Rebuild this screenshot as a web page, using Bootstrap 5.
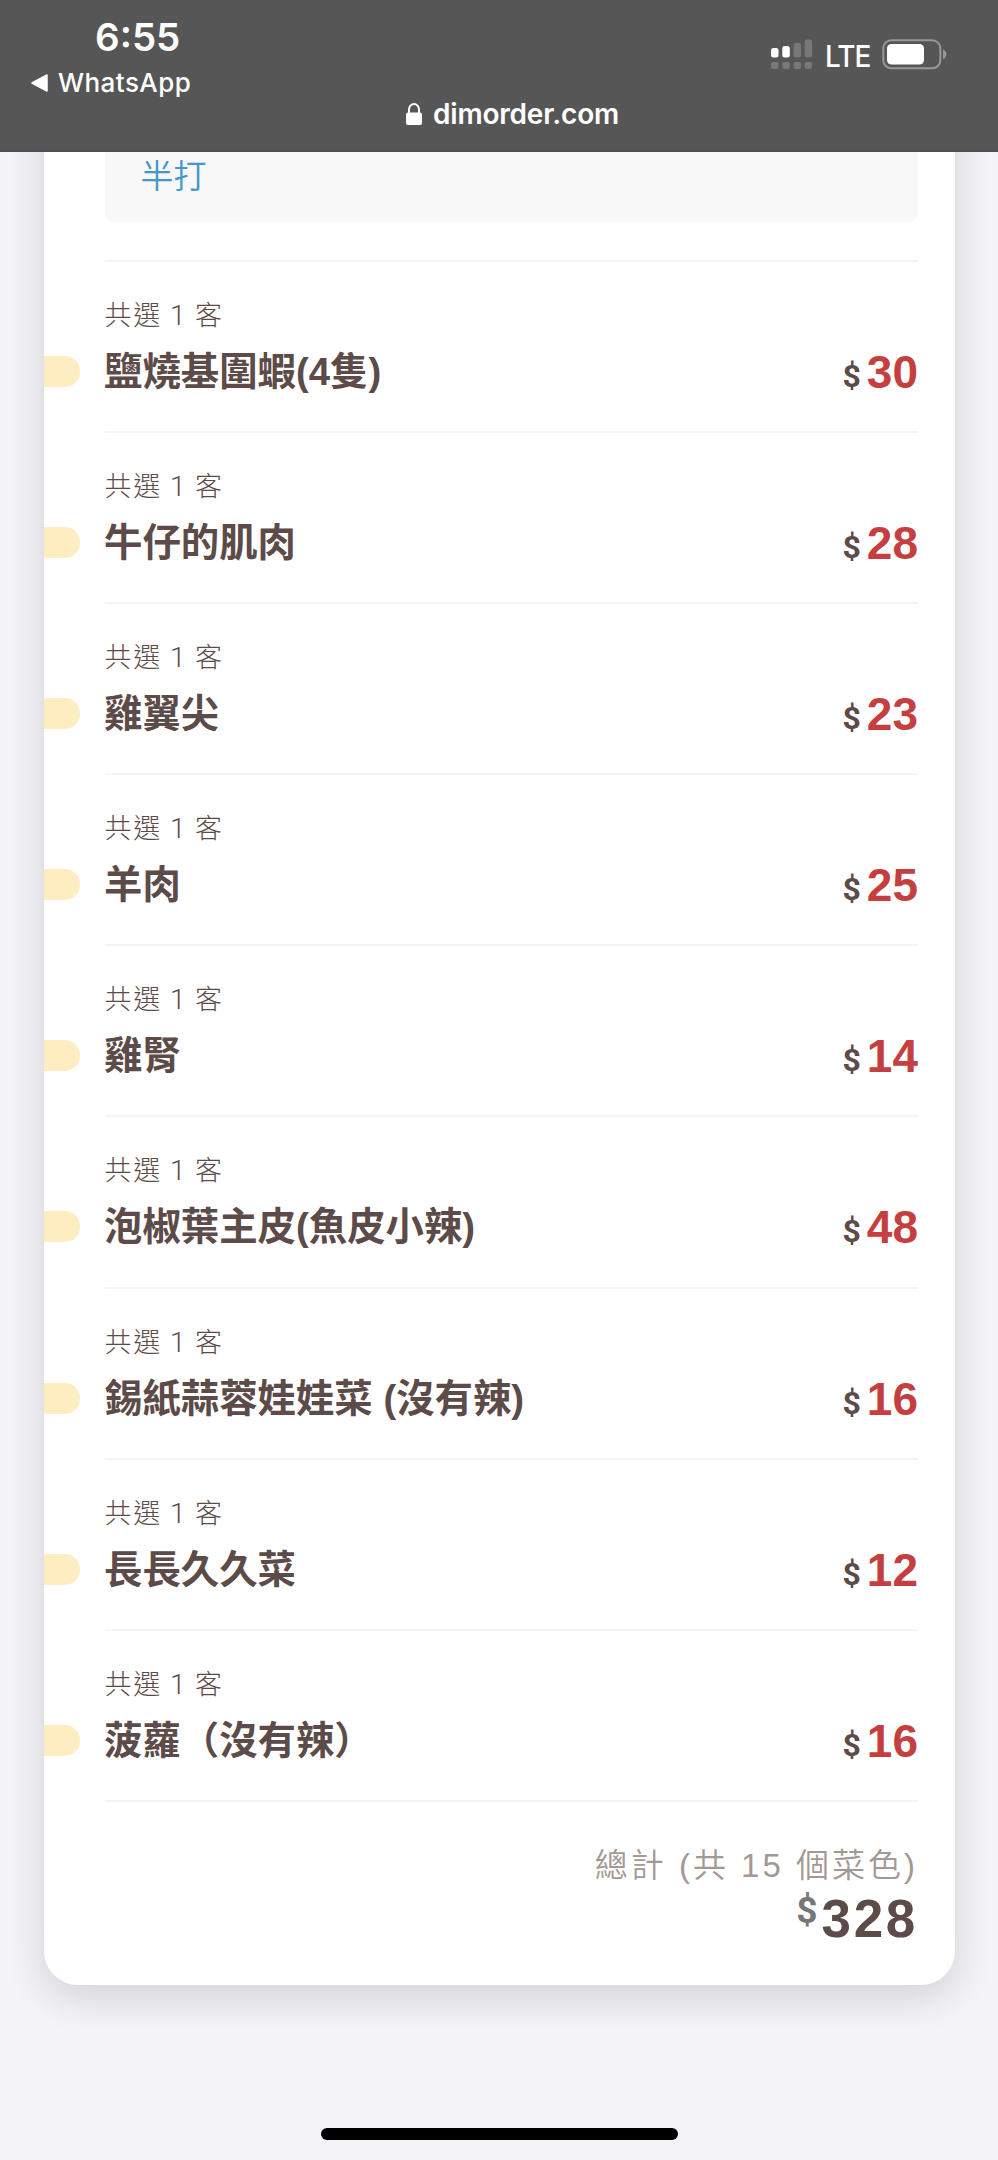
<!DOCTYPE html>
<html lang="zh-Hant">
<head>
<meta charset="utf-8">
<meta name="viewport" content="width=device-width, initial-scale=1">
<title>dimorder.com</title>
<link href="https://cdn.jsdelivr.net/npm/bootstrap@5.3.0/dist/css/bootstrap.min.css" rel="stylesheet">
<style>
  body { background: #f4f3f8; font-family: "Liberation Sans", "Noto Sans CJK TC", sans-serif; color: #5c4b48; height: 2160px; line-height: 1; white-space: nowrap; }
  .topbar { height: 152px; background: #575656; border-bottom: 2px solid #505050; z-index: 2; font-family: Inter, sans-serif; color: #fff; }
  .clock { font-size: 38.5px; font-weight: 600; line-height: 40px; padding: 17px 0 0 95px; }
  .back-app { font-size: 26px; font-weight: 500; line-height: 32px; letter-spacing: .45px; padding: 10px 0 0 31px; gap: 10px; }
  .site { font-size: 28px; font-weight: 600; line-height: 34px; letter-spacing: -.2px; padding: 0 0 0 405px; gap: 10px; margin-top: -2px; }
  .radio { font-size: 30px; font-weight: 500; line-height: 34px; letter-spacing: -1px; width: 45px; margin: 1px 12px 0 12px; transform: scaleX(.93); transform-origin: left; }
  .status { padding: 38px 51px 0 0; }
  .receipt { width: 911px; margin: -60px 0 0 43.5px; padding: 60px 36.5px 0 61px; height: 1893px; background: #fff; border-radius: 0 0 34px 34px; box-shadow: 0 12px 40px rgba(0,0,0,.14); }
  .option { height: 69.5px; background: #f8f8f8; border-radius: 0 0 9px 9px; padding: 4px 0 0 36px; font-size: 33px; line-height: 36px; color: #4598c9; font-weight: 350; margin-bottom: 38.5px; font-family: "Noto Sans CJK TC", sans-serif; }
  .dish { height: 171.1px; border-top: 2px solid #f4f4f5; }
  .dish-qty { font-size: 27px; font-weight: 300; line-height: 32px; letter-spacing: 1.8px; padding-top: 36px; font-family: "Noto Sans CJK TC", sans-serif; }
  .dish-qty b { font: 300 28px/32px Roboto, sans-serif; }
  .dish-line { height: 50px; margin-top: 15px; }
  .dish-tab { width: 36px; height: 31px; background: #fdedc1; border-radius: 0 15px 15px 0; margin-left: -61px; margin-right: 24.5px; margin-bottom: 1px; }
  .dish-name { font-size: 38.4px; font-weight: 700; font-family: "Liberation Sans", "Noto Sans CJK TC", sans-serif; line-height: 50px; }
  .price-sign { font: 700 32px/58px Roboto, sans-serif; height: 50px; margin-right: 6px; }
  .price-num { font: 700 46px/51px "Liberation Sans", sans-serif; color: #c53f41; height: 50px; }
  .sum { border-top: 2px solid #f4f4f5; padding-top: 44px; }
  .sum-label { font-size: 33px; font-weight: 350; letter-spacing: 3px; line-height: 40px; color: #a39994; font-family: "Liberation Sans", "Noto Sans CJK TC", sans-serif; }
  .sum-sign { font: 700 37px/50px Roboto, sans-serif; color: #777; margin-right: 4px; }
  .sum-num { font: 700 53px/66px "Liberation Sans", sans-serif; letter-spacing: 2.7px; }
  .home-bar { width: 357px; height: 12px; background: #000; margin-top: 143px; }
</style>
</head>
<body class="d-flex flex-column overflow-hidden">
<header class="topbar position-relative d-flex justify-content-between flex-shrink-0">
  <div>
    <div class="clock">6:55</div>
    <div class="back-app d-flex align-items-center">
      <svg width="17" height="18" viewBox="0 0 17 18"><path d="M16 1v16L1 9z" fill="#fff" stroke="#fff" stroke-width="1.5" stroke-linejoin="round"/></svg>
      <span>WhatsApp</span>
    </div>
    <div class="site d-flex align-items-center">
      <svg width="18" height="24" viewBox="0 0 18 24"><path d="M4 12V7.500a5 5.500 0 0 1 10 0V12" fill="none" stroke="#fff" stroke-width="2"/><rect x="1" y="10.500" width="16" height="12.500" rx="2" fill="#fff"/></svg>
      <span>dimorder.com</span>
    </div>
  </div>
  <div class="status d-flex align-items-start">
    <svg width="43" height="32" viewBox="0 0 43 32"><g fill="#fff"><rect x="1" y="10" width="7.500" height="9.500" rx="2.500"/><rect x="12.300" y="8" width="7.500" height="11.500" rx="2.500"/></g><g fill="#797777"><rect x="23.600" y="5" width="7.500" height="14.500" rx="2.500"/><rect x="34.600" y="1.500" width="7.500" height="18" rx="2.500"/><rect x="1" y="24" width="7.500" height="7" rx="2"/><rect x="12.300" y="24" width="7.500" height="7" rx="2"/><rect x="23.600" y="24" width="7.500" height="7" rx="2"/><rect x="34.600" y="24" width="7.500" height="7" rx="2"/></g></svg>
    <span class="radio">LTE</span>
    <svg width="65" height="32" viewBox="0 0 65 32"><rect x="1.300" y="2.300" width="57" height="28" rx="8" fill="none" stroke="#9a9795" stroke-width="2"/><rect x="5" y="6" width="37" height="20.500" rx="4.500" fill="#fff"/><path d="M61 11.500c4.500 1.500 4.500 8 0 9.500z" fill="#9a9795"/></svg>
  </div>
</header>

<main class="receipt flex-shrink-0">
  <div class="option">半打</div>

  <section class="dish"><div class="dish-qty">共選 <b>1</b> 客</div><div class="dish-line d-flex align-items-center"><i class="dish-tab"></i><span class="dish-name">鹽燒基圍蝦(4隻)</span><span class="price ms-auto d-flex"><span class="price-sign">$</span><span class="price-num">30</span></span></div></section>
  <section class="dish"><div class="dish-qty">共選 <b>1</b> 客</div><div class="dish-line d-flex align-items-center"><i class="dish-tab"></i><span class="dish-name">牛仔的肌肉</span><span class="price ms-auto d-flex"><span class="price-sign">$</span><span class="price-num">28</span></span></div></section>
  <section class="dish"><div class="dish-qty">共選 <b>1</b> 客</div><div class="dish-line d-flex align-items-center"><i class="dish-tab"></i><span class="dish-name">雞翼尖</span><span class="price ms-auto d-flex"><span class="price-sign">$</span><span class="price-num">23</span></span></div></section>
  <section class="dish"><div class="dish-qty">共選 <b>1</b> 客</div><div class="dish-line d-flex align-items-center"><i class="dish-tab"></i><span class="dish-name">羊肉</span><span class="price ms-auto d-flex"><span class="price-sign">$</span><span class="price-num">25</span></span></div></section>
  <section class="dish"><div class="dish-qty">共選 <b>1</b> 客</div><div class="dish-line d-flex align-items-center"><i class="dish-tab"></i><span class="dish-name">雞腎</span><span class="price ms-auto d-flex"><span class="price-sign">$</span><span class="price-num">14</span></span></div></section>
  <section class="dish"><div class="dish-qty">共選 <b>1</b> 客</div><div class="dish-line d-flex align-items-center"><i class="dish-tab"></i><span class="dish-name">泡椒葉主皮(魚皮小辣)</span><span class="price ms-auto d-flex"><span class="price-sign">$</span><span class="price-num">48</span></span></div></section>
  <section class="dish"><div class="dish-qty">共選 <b>1</b> 客</div><div class="dish-line d-flex align-items-center"><i class="dish-tab"></i><span class="dish-name">錫紙蒜蓉娃娃菜 (沒有辣)</span><span class="price ms-auto d-flex"><span class="price-sign">$</span><span class="price-num">16</span></span></div></section>
  <section class="dish"><div class="dish-qty">共選 <b>1</b> 客</div><div class="dish-line d-flex align-items-center"><i class="dish-tab"></i><span class="dish-name">長長久久菜</span><span class="price ms-auto d-flex"><span class="price-sign">$</span><span class="price-num">12</span></span></div></section>
  <section class="dish"><div class="dish-qty">共選 <b>1</b> 客</div><div class="dish-line d-flex align-items-center"><i class="dish-tab"></i><span class="dish-name">菠蘿（沒有辣）</span><span class="price ms-auto d-flex"><span class="price-sign">$</span><span class="price-num">16</span></span></div></section>

  <section class="sum text-end">
    <div class="sum-label">總計 (共 15 個菜色)</div>
    <div class="d-flex justify-content-end"><span class="sum-sign">$</span><span class="sum-num">328</span></div>
  </section>
</main>

<div class="home-bar rounded-pill align-self-center flex-shrink-0"></div>
<script src="https://cdn.jsdelivr.net/npm/bootstrap@5.3.0/dist/js/bootstrap.bundle.min.js"></script>
</body>
</html>
